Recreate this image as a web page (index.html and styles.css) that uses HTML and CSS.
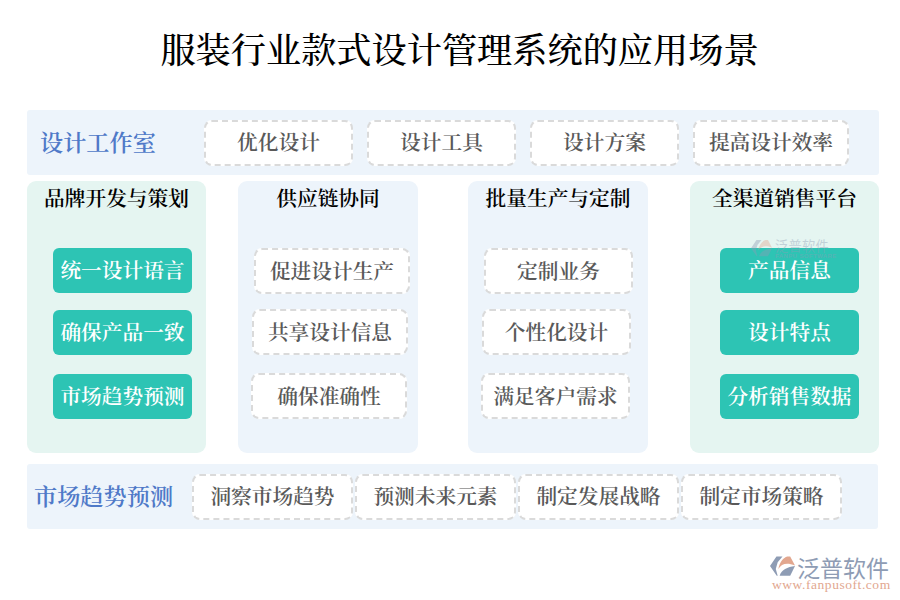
FILE: index.html
```html
<!DOCTYPE html>
<html lang="zh-CN">
<head>
<meta charset="utf-8">
<title>服装行业款式设计管理系统的应用场景</title>
<link rel="stylesheet" href="styles.css">
</head>
<body>
<div class="page">
  <h1 class="title">服装行业款式设计管理系统的应用场景</h1>
  <section class="band band-top">
    <div class="band-label label-top">设计工作室</div>
    <div class="chip w149 gap-top">优化设计</div>
    <div class="chip w149 gap-top">设计工具</div>
    <div class="chip w149 gap-top">设计方案</div>
    <div class="chip w156 gap-top">提高设计效率</div>
  </section>
  <section class="columns">
    <div class="col col-green c1">
      <h2 class="col-title">品牌开发与策划</h2>
      <div class="btn">统一设计语言</div>
      <div class="btn">确保产品一致</div>
      <div class="btn last">市场趋势预测</div>
    </div>
    <div class="col col-blue c2">
      <h2 class="col-title">供应链协同</h2>
      <div class="chip w156 row1 in16">促进设计生产</div>
      <div class="chip w156 row2 in14">共享设计信息</div>
      <div class="chip w156 row3 in13">确保准确性</div>
    </div>
    <div class="col col-blue c3">
      <h2 class="col-title">批量生产与定制</h2>
      <div class="chip w149 row1 in16">定制业务</div>
      <div class="chip w149 row2 in14">个性化设计</div>
      <div class="chip w149 row3 in13">满足客户需求</div>
    </div>
    <div class="col col-green c4">
      <h2 class="col-title">全渠道销售平台</h2>
      <div class="btn">产品信息</div>
      <div class="btn">设计特点</div>
      <div class="btn last">分析销售数据</div>
      <div class="mark-wm" aria-hidden="true">
        <svg class="wm-icon" viewBox="0 0 26 22"><path d="M0 10 6.7 0H13L8 6 6 13 8 20H7Z" fill="#8e9cb4"/><path d="M8.7 13C10 6 14 1 18 0H21L26 9.5C17 6 12 8 8.7 13Z" fill="#e2a78f"/><path d="M10 20C12 14 18 11 26 10L21 20Z" fill="#8e9cb4"/></svg>
        <div class="wm-text"><span class="wm-name">泛普软件</span><span class="wm-sub">FANPU SOFTWARE</span></div>
      </div>
    </div>
  </section>
  <section class="band band-bottom">
    <div class="band-label label-bottom">市场趋势预测</div>
    <div class="chip w161">洞察市场趋势</div>
    <div class="chip w161">预测未来元素</div>
    <div class="chip w161">制定发展战略</div>
    <div class="chip w161">制定市场策略</div>
  </section>
  <footer class="logo">
    <svg class="logo-icon" viewBox="0 0 26 22"><path d="M0 10 6.7 0H13L8 6 6 13 8 20H7Z" fill="#8e9cb4"/><path d="M8.7 13C10 6 14 1 18 0H21L26 9.5C17 6 12 8 8.7 13Z" fill="#e2a78f"/><path d="M10 20C12 14 18 11 26 10L21 20Z" fill="#8e9cb4"/></svg>
    <div class="logo-text">
      <div class="logo-name">泛普软件</div>
      <div class="logo-url">www.fanpusoft.com</div>
    </div>
  </footer>
</div>
</body>
</html>
```
FILE: styles.css
```css
* { box-sizing: border-box; margin: 0; padding: 0; }
body {
  background: #fff;
  font-family: "Noto Serif CJK SC", "Source Han Serif SC", "Liberation Serif", "Noto Sans CJK SC", serif;
}
.page { width: 900px; height: 600px; padding: 0 21px 0 27px; overflow: hidden; }
.title {
  height: 110px; padding-top: 26px; padding-left: 13px;
  font-size: 35.2px; line-height: 44px; font-weight: 500;
  color: #000; text-align: center;
  white-space: nowrap;
}
.band { height: 65px; background: #edf4fb; border-radius: 3px; display: flex; align-items: center; }
.band-top { width: 852px; }
.band-bottom { width: 851px; margin-top: 11px; gap: 2px; }
.band-label { font-size: 23.2px; line-height: 30px; padding-bottom: 3px; color: #4f79c8; white-space: nowrap; font-weight: 600; }
.label-top { padding-left: 13px; width: 177px; }
.label-bottom { padding-left: 7px; width: 163px; }
.chip {
  height: 46px; background: #fff; border: 2px dashed #dadada; border-radius: 8px;
  display: flex; align-items: center; justify-content: center;
  padding-bottom: 3px;
  font-size: 20.7px; color: #595959; font-weight: 600; white-space: nowrap;
}
.w149 { width: 149px; }
.w156 { width: 156px; }
.w161 { width: 161px; }
.gap-top { margin-right: 14px; }
.columns { display: flex; margin-top: 6px; height: 272px; }
.col { border-radius: 9px; height: 272px; position: relative; display: flex; flex-direction: column; }
.col-green { background: #e5f5f1; }
.col-blue { background: #edf4fb; }
.c1 { width: 179px; margin-right: 32px; }
.c2 { width: 180px; margin-right: 50px; }
.c3 { width: 180px; margin-right: 42px; }
.c4 { width: 189px; }
.col-title {
  font-size: 20.7px; font-weight: 600; line-height: 28px; color: #000;
  text-align: center; height: 67px; padding-top: 2px; white-space: nowrap;
}
.btn {
  width: 139px; height: 45px; background: #2dc4b4; border-radius: 6px; color: #fff;
  font-size: 20.7px; font-weight: 600; white-space: nowrap;
  display: flex; align-items: center; justify-content: center;
  padding-bottom: 3px;
  margin-bottom: 17px;
}
.btn.last { margin-top: 2px; margin-bottom: 0; }
.c1 .btn { margin-left: 26px; }
.c4 .btn { margin-left: 30px; }
.row1 { margin-bottom: 15px; }
.row2 { margin-bottom: 18px; }
.in16 { margin-left: 16px; }
.in14 { margin-left: 14px; }
.in13 { margin-left: 13px; }
.mark-wm { position: absolute; left: 61px; top: 57px; display: flex; gap: 3px; opacity: .4; }
.wm-icon { width: 21px; height: 22px; }
.wm-text { display: flex; flex-direction: column; font-family: "Noto Sans CJK SC", sans-serif; color: #8e9cb4; }
.wm-name { font-size: 13.2px; line-height: 15px; letter-spacing: .3px; }
.wm-sub { font-size: 6px; line-height: 7px; letter-spacing: .4px; font-weight: 700; font-family: "Liberation Sans", sans-serif; }
.logo { display: flex; justify-content: flex-end; align-items: flex-start; gap: 2px; margin-top: 27px; margin-right: -11px; }
.logo-icon { width: 25px; height: 22px; }
.logo-text { width: 93px; display: flex; flex-direction: column; }
.logo-name { font-family: "Noto Sans CJK SC", sans-serif; font-size: 23px; line-height: 23px; color: #8e9cb4; white-space: nowrap; }
.logo-url { font-family: "Liberation Serif", serif; font-size: 13.5px; line-height: 11px; margin-left: -25px; letter-spacing: .55px; color: #e2a78f; white-space: nowrap; }
```
